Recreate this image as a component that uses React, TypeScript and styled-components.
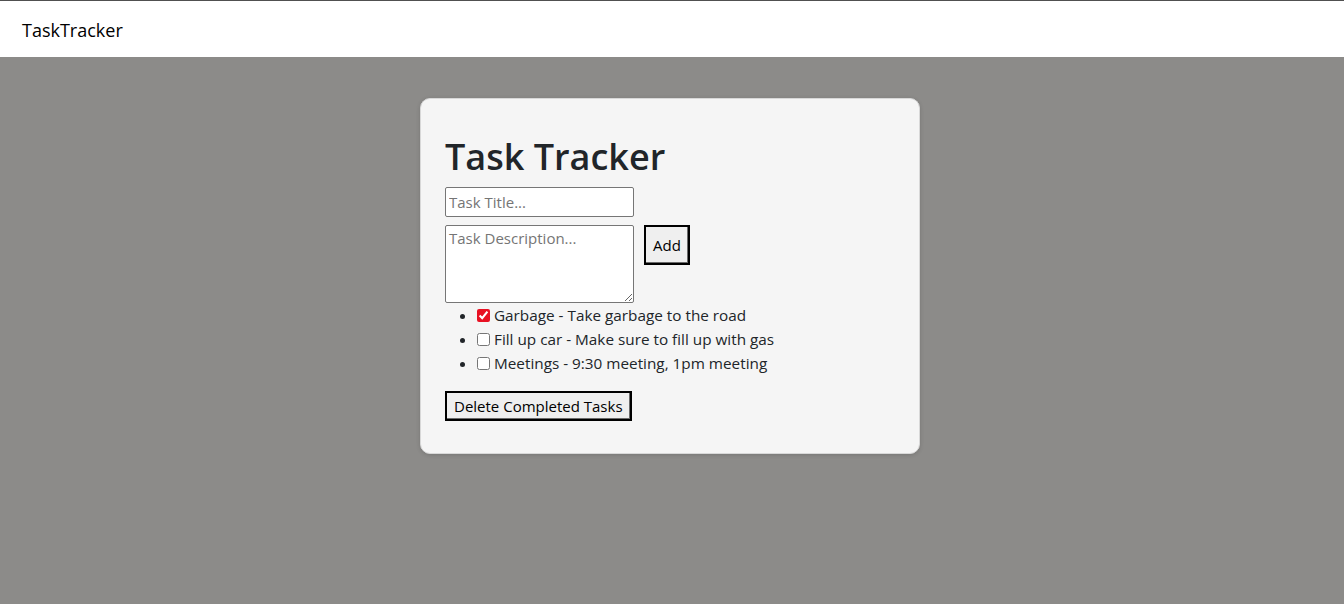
import React, { useState } from "react";
import styled, { createGlobalStyle } from "styled-components";

const Global = createGlobalStyle`
  html, body { margin: 0; padding: 0; }
  body {
    background: #8c8b89;
    font-family: "Open Sans", "Noto Sans", sans-serif;
    font-size: 16px;
    color: #212529;
    min-height: 604px;
  }
`;

const Page = styled.div`
  min-height: 604px;
  background: #8c8b89;
  display: flex;
  flex-direction: column;
`;

const Navbar = styled.nav`
  height: 56px;
  background: #ffffff;
  border-top: 1px solid #505050;
  display: flex;
  align-items: center;
  padding: 0 22px;
`;

const Brand = styled.span`
  font-size: 18px;
  color: #000;
  padding-top: 2px;
`;

const Main = styled.main`
  display: flex;
  justify-content: center;
  padding-top: 41px;
`;

const Card = styled.section`
  width: 450px;
  padding: 32px 24px 32px;
  background: #f5f5f5;
  border-radius: 10px;
  box-shadow: 0 1px 4px rgba(0, 0, 0, 0.15);
  border: 1px solid #d8d8d8;
  margin-left: -4px;
`;

const Title = styled.h1`
  margin: 0 0 8px;
  font-size: 36px;
  font-weight: 600;
  line-height: 48px;
  padding-top: 2px;
  height: 46px;
  color: #212529;
`;

const TitleInput = styled.input`
  display: block;
  box-sizing: border-box;
  width: 189px;
  height: 30px;
  margin: 0 0 8px;
  padding: 1px 3px;
  font: inherit;
  font-size: 15px;
  border: 1px solid #767676;
  border-radius: 2px;
  background: #fff;
  &::placeholder { color: #757575; }
`;

const Row = styled.div`
  display: flex;
  align-items: flex-start;
  gap: 10px;
`;

const DescArea = styled.textarea`
  box-sizing: border-box;
  width: 189px;
  height: 78px;
  padding: 2px 3px;
  font: inherit;
  font-size: 15px;
  border: 1px solid #767676;
  border-radius: 2px;
  background: #fff;
  margin: 0;
  &::placeholder { color: #757575; }
`;

const Button = styled.button<{ $h: number }>`
  box-sizing: border-box;
  height: ${(p) => p.$h}px;
  padding: 0 7px;
  font: inherit;
  font-size: 15px;
  color: #000;
  background: #efefef;
  border: 2px solid #000;
  border-radius: 0;
  box-shadow: inset -1px -1px 0 #6b6b6b;
`;

const List = styled.ul`
  margin: 0 0 16px;
  padding-left: 32px;
  list-style: disc;
`;

const Item = styled.li`
  line-height: 24px;
  font-size: 15.3px;
`;

const Check = styled.input`
  width: 13px;
  height: 13px;
  margin: 0 4px 0 0;
  vertical-align: -1px;
  accent-color: #e81123;
`;

const tasks = [
  { text: "Garbage - Take garbage to the road", done: true },
  { text: "Fill up car - Make sure to fill up with gas", done: false },
  { text: "Meetings - 9:30 meeting, 1pm meeting", done: false },
];

export default function App() {
  const [items, setItems] = useState(tasks);
  return (
    <Page>
      <Global />
      <Navbar>
        <Brand>TaskTracker</Brand>
      </Navbar>
      <Main>
        <Card>
          <Title>Task Tracker</Title>
          <TitleInput placeholder="Task Title..." />
          <Row>
            <DescArea placeholder="Task Description..." />
            <Button $h={40}>Add</Button>
          </Row>
          <List>
            {items.map((t, i) => (
              <Item key={i}>
                <Check
                  type="checkbox"
                  checked={t.done}
                  onChange={() =>
                    setItems(items.map((x, j) => (j === i ? { ...x, done: !x.done } : x)))
                  }
                />
                {t.text}
              </Item>
            ))}
          </List>
          <Button $h={30}>Delete Completed Tasks</Button>
        </Card>
      </Main>
    </Page>
  );
}
